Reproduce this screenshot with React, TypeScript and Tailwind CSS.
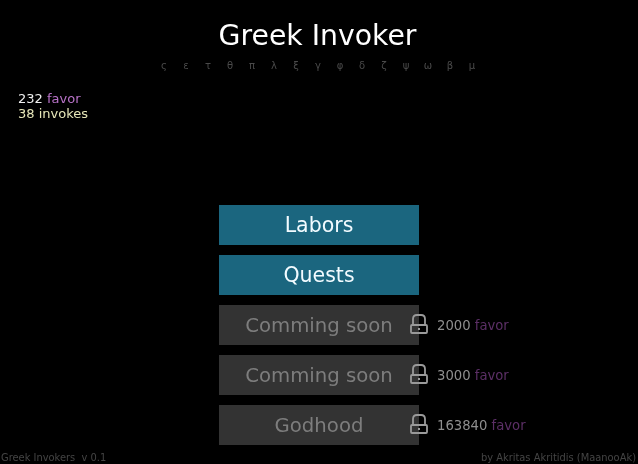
import React from 'react';

const LETTERS = ['ς', 'ε', 'τ', 'θ', 'π', 'λ', 'ξ', 'γ', 'φ', 'δ', 'ζ', 'ψ', 'ω', 'β', 'μ'];

const FONT = "font-['DejaVu_Sans',sans-serif]";

const Lock = () => (
  <svg width="20" height="24" viewBox="0 0 20 24" fill="none" className="shrink-0 text-[#9a9a9a]">
    <path d="M4 12V6Q4 2 8 2H12Q16 2 16 6V12" stroke="currentColor" strokeWidth="1.8" />
    <rect x="2" y="12" width="16" height="8" rx="1" stroke="currentColor" strokeWidth="1.8" />
    <rect x="9" y="15" width="2" height="2" fill="currentColor" />
  </svg>
);

const MainButton = ({ label }: { label: string }) => (
  <button className="w-[200px] h-10 pt-px bg-[#1b667f] text-[#f2fbff] text-[20.5px] flex items-center justify-center">
    {label}
  </button>
);

const LockedRow = ({ label, cost }: { label: string; cost: number }) => (
  <div className="flex items-center">
    <button className="w-[200px] h-10 pt-px bg-[#333333] text-[#7d7d7d] text-[19.7px] flex items-center justify-center shrink-0">
      {label}
    </button>
    <div className="-ml-[10px] mr-2 flex"><Lock /></div>
    <span className="pt-px text-[13.2px] text-[#8f8f8f] whitespace-nowrap">
      {cost} <span className="text-[#5c2f66]">favor</span>
    </span>
  </div>
);

export default function App() {
  return (
    <div className="w-[638px] h-[464px] bg-black overflow-hidden">
      <div className={`w-full h-full flex flex-col will-change-transform ${FONT}`}>
        <h1 className="mt-[19px] h-[34px] pr-[3px] leading-[34px] text-center text-[28.3px] text-white">Greek Invoker</h1>
        <div className="mt-[4px] h-[16px] pl-[158px] flex items-center gap-[10px] text-[10px] text-[#4a4a4a]">
          {LETTERS.map((l) => (
            <span key={l} className="w-[12px] text-center">{l}</span>
          ))}
        </div>

        <div className="mt-[18px] ml-[18px] text-[13px] leading-[15px]">
          <div className="text-[#f0f0f0]">232 <span className="text-[#b872c8]">favor</span></div>
          <div className="text-[#e6e6b8]">38 invokes</div>
        </div>

        <div className="mt-[84px] ml-[219px] flex flex-col gap-[10px]">
          <MainButton label="Labors" />
          <MainButton label="Quests" />
          <LockedRow label="Comming soon" cost={2000} />
          <LockedRow label="Comming soon" cost={3000} />
          <LockedRow label="Godhood" cost={163840} />
        </div>

        <div className="mt-auto mb-[-2px] h-[16px] pl-px pr-[2px] flex items-center justify-between text-[9.9px] text-[#444444]">
          <span>Greek Invokers&nbsp; v 0.1</span>
          <span>by Akritas Akritidis (MaanooAk)</span>
        </div>
      </div>
    </div>
  );
}
